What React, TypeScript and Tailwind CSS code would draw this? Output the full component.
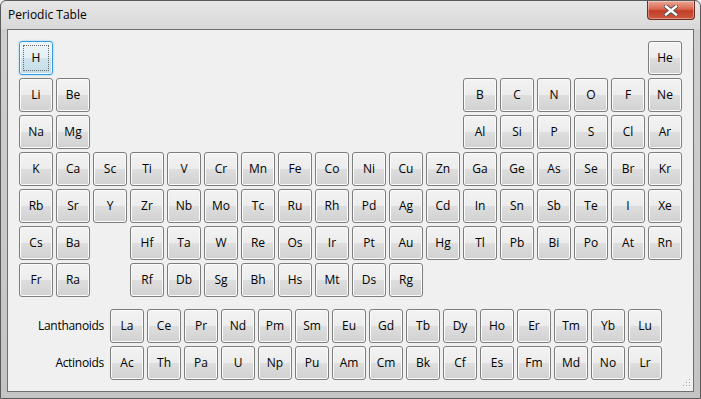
import React from 'react';

const rows: string[][] = [
  ['H', '', '', '', '', '', '', '', '', '', '', '', '', '', '', '', '', 'He'],
  ['Li', 'Be', '', '', '', '', '', '', '', '', '', '', 'B', 'C', 'N', 'O', 'F', 'Ne'],
  ['Na', 'Mg', '', '', '', '', '', '', '', '', '', '', 'Al', 'Si', 'P', 'S', 'Cl', 'Ar'],
  ['K', 'Ca', 'Sc', 'Ti', 'V', 'Cr', 'Mn', 'Fe', 'Co', 'Ni', 'Cu', 'Zn', 'Ga', 'Ge', 'As', 'Se', 'Br', 'Kr'],
  ['Rb', 'Sr', 'Y', 'Zr', 'Nb', 'Mo', 'Tc', 'Ru', 'Rh', 'Pd', 'Ag', 'Cd', 'In', 'Sn', 'Sb', 'Te', 'I', 'Xe'],
  ['Cs', 'Ba', '', 'Hf', 'Ta', 'W', 'Re', 'Os', 'Ir', 'Pt', 'Au', 'Hg', 'Tl', 'Pb', 'Bi', 'Po', 'At', 'Rn'],
  ['Fr', 'Ra', '', 'Rf', 'Db', 'Sg', 'Bh', 'Hs', 'Mt', 'Ds', 'Rg', '', '', '', '', '', '', ''],
];

const lanthanoids = ['La', 'Ce', 'Pr', 'Nd', 'Pm', 'Sm', 'Eu', 'Gd', 'Tb', 'Dy', 'Ho', 'Er', 'Tm', 'Yb', 'Lu'];
const actinoids = ['Ac', 'Th', 'Pa', 'U', 'Np', 'Pu', 'Am', 'Cm', 'Bk', 'Cf', 'Es', 'Fm', 'Md', 'No', 'Lr'];

function ElementButton({ symbol, focused }: { symbol: string; focused?: boolean }) {
  if (focused) {
    return (
      <button className="relative w-[34px] h-[34px] rounded-[3px] border border-[#3399dd] bg-[linear-gradient(to_bottom,#eef6fa_0%,#e3eff5_50%,#d0e5ef_50%,#c4dde9_100%)] shadow-[inset_0_0_0_1px_#f4fbff,0_0_2px_#7ecbf5] text-[12px] text-black">
        <span className="absolute inset-[3px] border border-dotted border-[#6a6a6a]" />
        {symbol}
      </button>
    );
  }
  return (
    <button className="w-[34px] h-[34px] rounded-[3px] border border-[#7d7d7d] bg-[linear-gradient(to_bottom,#f3f3f3_0%,#ececec_50%,#dedede_50%,#d1d1d1_100%)] shadow-[inset_0_0_0_1px_#fbfbfb] text-[12px] text-black">
      {symbol}
    </button>
  );
}

export default function App() {
  return (
    <div className="w-[701px] h-[399px] bg-[#f0f0f0]" style={{ fontFamily: '"Segoe UI", "Open Sans", sans-serif' }}>
      <div className="relative w-[701px] h-[399px] flex flex-col rounded-t-[6px] border border-[#5a5a5a] bg-[linear-gradient(to_bottom,#e6e6e6_0px,#d9d9d9_28px,#cfcfcf_28px,#c4c4c4_100%)] px-[6px] pb-[6px]">
        {/* Title bar */}
        <div className="h-[28px] flex items-center pl-[1px] text-[12px] text-black">Periodic Table</div>
        <div className="absolute top-0 right-[5px] w-[48px] h-[19px] rounded-b-[4px] border border-t-0 border-[#6e2c22] bg-[linear-gradient(to_bottom,#e9a896_0%,#d8664f_45%,#c23d27_55%,#cc5a40_100%)] shadow-[inset_0_0_0_1px_rgba(255,255,255,0.35)] flex items-center justify-center">
          <svg width="14" height="11" viewBox="0 0 14 11">
            <path d="M2 1.5 L12 9.5 M12 1.5 L2 9.5" stroke="#4a4a4a" strokeWidth="4.2" strokeLinecap="square" />
            <path d="M2 1.5 L12 9.5 M12 1.5 L2 9.5" stroke="#ffffff" strokeWidth="2.4" strokeLinecap="square" />
          </svg>
        </div>

        {/* Client area */}
        <div className="relative flex-1 border border-[#6f6f6f] bg-[#f0f0f0] pl-[11px] pt-[11px]">
          <div className="grid grid-cols-[repeat(18,34px)] auto-rows-[34px] gap-[3px]">
            {rows.map((row, r) =>
              row.map((s, c) =>
                s ? <ElementButton key={`${r}-${c}`} symbol={s} focused={s === 'H'} /> : <div key={`${r}-${c}`} />
              )
            )}
          </div>

          <div className="mt-[12px] grid grid-cols-[88px_repeat(15,34px)] auto-rows-[34px] gap-[3px] text-[12px] text-black">
            <div className="flex items-center justify-end pr-[3px] tracking-[-0.3px]">Lanthanoids</div>
            {lanthanoids.map((s) => (
              <ElementButton key={s} symbol={s} />
            ))}
            <div className="flex items-center justify-end pr-[3px] tracking-[-0.3px]">Actinoids</div>
            {actinoids.map((s) => (
              <ElementButton key={s} symbol={s} />
            ))}
          </div>

          {/* resize grip */}
          <svg className="absolute right-[2px] bottom-[2px]" width="10" height="10" viewBox="0 0 10 10">
            {[
              [8, 0],
              [8, 3],
              [5, 3],
              [8, 6],
              [5, 6],
              [2, 6],
            ].map(([x, y]) => (
              <g key={`${x}-${y}`}>
                <rect x={x + 1} y={y + 1} width="1" height="1" fill="#ffffff" />
                <rect x={x} y={y} width="1" height="1" fill="#a0a0a0" />
              </g>
            ))}
          </svg>
        </div>
      </div>
    </div>
  );
}
